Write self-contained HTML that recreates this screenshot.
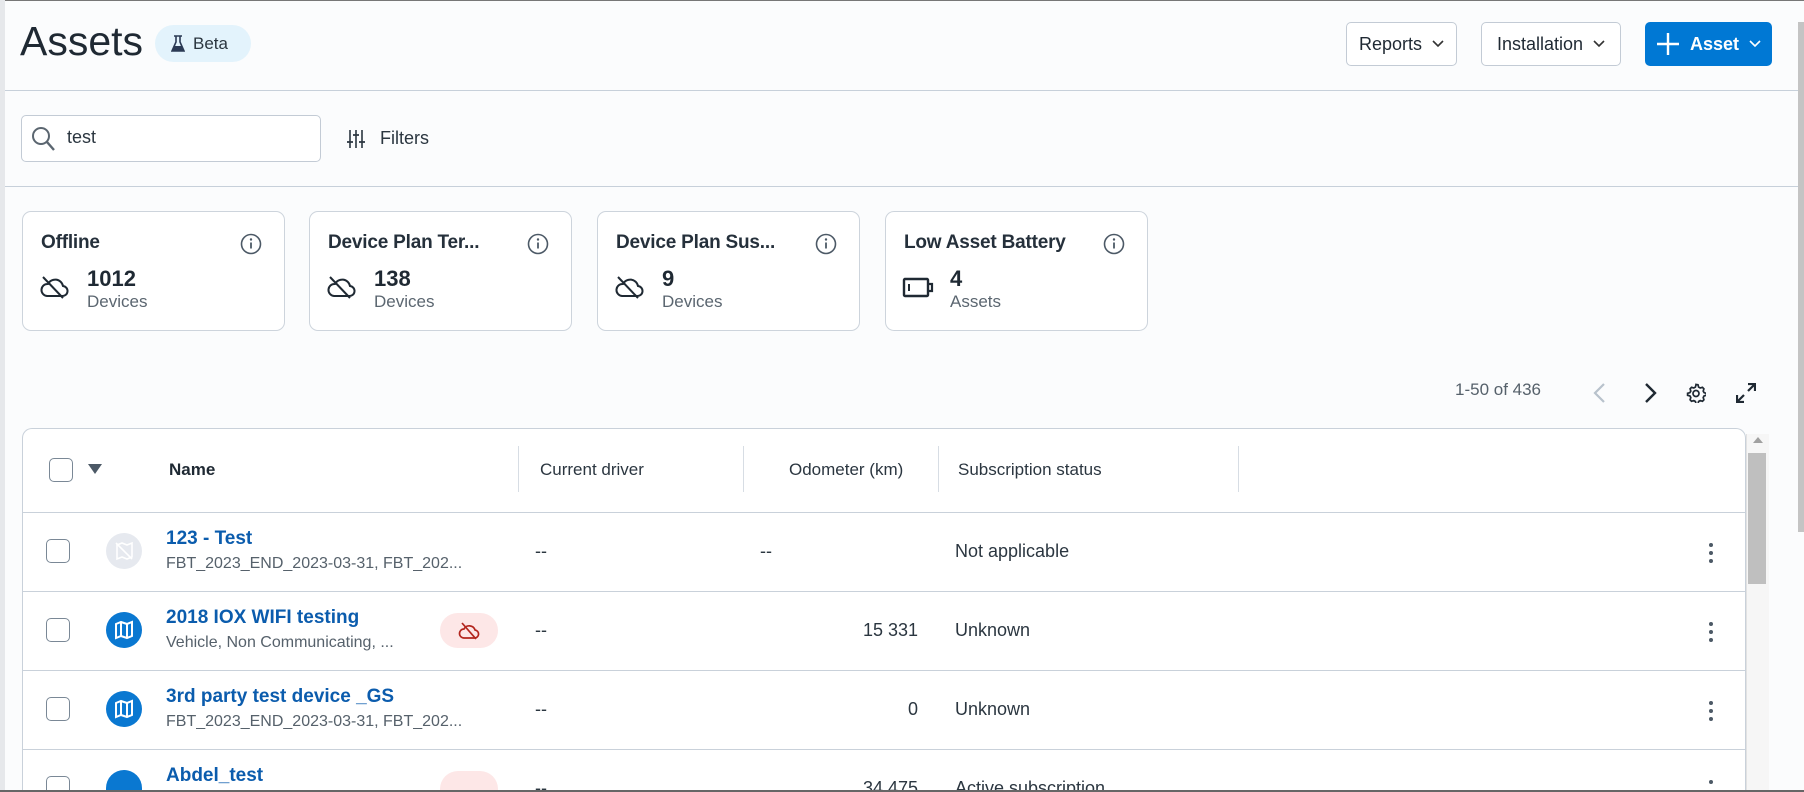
<!DOCTYPE html>
<html style="overflow:hidden;height:792px"><head><meta charset="utf-8"><style>
*{box-sizing:border-box;margin:0;padding:0}
body{width:1804px;height:792px;overflow:hidden;background:#fbfcfd;font-family:"Liberation Sans",Arial,sans-serif;color:#1f2933;position:relative}
.a{position:absolute}
.btn{position:absolute;top:22px;height:44px;border:1px solid #c3cbd5;border-radius:5px;background:#fff;font-size:18px;display:flex;align-items:center;justify-content:center;gap:10px;color:#1f2933}
.card{position:absolute;top:211px;width:263px;height:120px;border:1px solid #cdd4dc;border-radius:9px;background:#fff}
.card .t{position:absolute;left:18px;top:20px;font-size:19px;font-weight:bold;color:#25303b;letter-spacing:-0.2px}
.card .n{position:absolute;left:64px;top:54px;font-size:22px;font-weight:bold;color:#1f2933}
.card .u{position:absolute;left:64px;top:80px;font-size:17px;color:#5b6670}
.card .i{position:absolute;right:22px;top:21px}
.card .ic{position:absolute;left:16px;top:62px}
.hd{position:absolute;top:460px;font-size:17px;color:#2b3640}
.sep{position:absolute;top:446px;width:1px;height:46px;background:#d7dde4}
.rl{position:absolute;left:22px;width:1724px;height:1px;background:#c9d1da}
.cb{position:absolute;width:24px;height:24px;border:1.5px solid #7a8896;border-radius:5px;background:#fff}
.nm{position:absolute;left:166px;font-size:19px;color:#0b5cad;font-weight:bold}
.sub{position:absolute;left:166px;font-size:16px;color:#56616b}
.cell{position:absolute;font-size:18px;color:#2b3640}
.av{position:absolute;left:106px;width:36px;height:36px;border-radius:50%;background:#0a78d1;display:flex;align-items:center;justify-content:center}
.kb{position:absolute;left:1709px;width:4px}
.kb i{display:block;width:4px;height:4px;border-radius:2px;background:#4c5966;margin-bottom:4px}
.pill{position:absolute;left:440px;width:58px;height:35px;border-radius:18px;background:#fde7e7;display:flex;align-items:center;justify-content:center}
</style></head><body>
<div class="a" style="left:0;top:0;width:1804px;height:1px;background:#777"></div>
<div class="a" style="left:0;top:0;width:5px;height:792px;background:#e6e8eb"></div>
<div class="a" style="left:1798px;top:22px;width:6px;height:510px;background:#c4c4c4"></div>

<div class="a" style="left:20px;top:18px;font-size:41px;color:#1f2933">Assets</div>
<div class="a" style="left:155px;top:25px;width:96px;height:37px;border-radius:19px;background:#e3f3fc;display:flex;align-items:center;padding-left:16px;gap:8px;font-size:17px;color:#2b3640">
<svg width="14" height="18" viewBox="0 0 14 18"><path d="M3 1h8M5 1v6L1 16h12L9 7V1" fill="none" stroke="#2b3a55" stroke-width="1.6"/><path d="M3 11h8l2 5H1z" fill="#2b3a55"/></svg>Beta</div>

<div class="btn" style="left:1346px;width:111px">Reports <svg width="12" height="8"><path d="M1 1l5 5 5-5" fill="none" stroke="#333" stroke-width="1.6"/></svg></div>
<div class="btn" style="left:1481px;width:140px">Installation <svg width="12" height="8"><path d="M1 1l5 5 5-5" fill="none" stroke="#333" stroke-width="1.6"/></svg></div>
<div class="btn" style="left:1645px;width:127px;background:#0078d4;border-color:#0078d4;color:#fff;font-weight:bold;gap:10px"><svg width="24" height="24"><path d="M12 1v22M1 12h22" stroke="#fff" stroke-width="2.4"/></svg>Asset <svg width="12" height="8"><path d="M1 1l5 5 5-5" fill="none" stroke="#fff" stroke-width="1.6"/></svg></div>

<div class="a" style="left:5px;top:90px;width:1793px;height:1px;background:#c7d0da"></div>
<div class="a" style="left:21px;top:115px;width:300px;height:47px;border:1px solid #c3cbd5;border-radius:5px;background:#fff"></div>
<svg class="a" style="left:30px;top:125px" width="26" height="28"><circle cx="11" cy="11" r="8" fill="none" stroke="#5b6670" stroke-width="2"/><path d="M17 17l7 8" stroke="#5b6670" stroke-width="2.4"/></svg>
<div class="a" style="left:67px;top:127px;font-size:18px;color:#2b3640">test</div>
<svg class="a" style="left:347px;top:129px" width="18" height="20"><path d="M3 1v18M9 1v18M15 1v18" stroke="#2b3640" stroke-width="1.6"/><path d="M0 13h6M6 6h6M12 13h6" stroke="#2b3640" stroke-width="1.8"/></svg>
<div class="a" style="left:380px;top:128px;font-size:18px;color:#2b3640">Filters</div>
<div class="a" style="left:5px;top:186px;width:1793px;height:1px;background:#c7d0da"></div>

<div class="card" style="left:22px"><div class="t">Offline</div><svg class="i" width="22" height="22"><circle cx="11" cy="11" r="9.5" fill="none" stroke="#4c5966" stroke-width="1.6"/><path d="M11 9.5v6" stroke="#4c5966" stroke-width="1.8"/><circle cx="11" cy="6.5" r="1.2" fill="#4c5966"/></svg>
<svg class="ic" width="30" height="26"><path d="M8 22h15a5 5 0 0 0 1-10 8 8 0 0 0-15-2 6 6 0 0 0-1 12z" fill="none" stroke="#1f2933" stroke-width="2"/><path d="M4 3l20 21" stroke="#1f2933" stroke-width="2"/></svg>
<div class="n">1012</div><div class="u">Devices</div></div>
<div class="card" style="left:309px"><div class="t">Device Plan Ter...</div><svg class="i" width="22" height="22"><circle cx="11" cy="11" r="9.5" fill="none" stroke="#4c5966" stroke-width="1.6"/><path d="M11 9.5v6" stroke="#4c5966" stroke-width="1.8"/><circle cx="11" cy="6.5" r="1.2" fill="#4c5966"/></svg>
<svg class="ic" width="30" height="26"><path d="M8 22h15a5 5 0 0 0 1-10 8 8 0 0 0-15-2 6 6 0 0 0-1 12z" fill="none" stroke="#1f2933" stroke-width="2"/><path d="M4 3l20 21" stroke="#1f2933" stroke-width="2"/></svg>
<div class="n">138</div><div class="u">Devices</div></div>
<div class="card" style="left:597px"><div class="t">Device Plan Sus...</div><svg class="i" width="22" height="22"><circle cx="11" cy="11" r="9.5" fill="none" stroke="#4c5966" stroke-width="1.6"/><path d="M11 9.5v6" stroke="#4c5966" stroke-width="1.8"/><circle cx="11" cy="6.5" r="1.2" fill="#4c5966"/></svg>
<svg class="ic" width="30" height="26"><path d="M8 22h15a5 5 0 0 0 1-10 8 8 0 0 0-15-2 6 6 0 0 0-1 12z" fill="none" stroke="#1f2933" stroke-width="2"/><path d="M4 3l20 21" stroke="#1f2933" stroke-width="2"/></svg>
<div class="n">9</div><div class="u">Devices</div></div>
<div class="card" style="left:885px"><div class="t">Low Asset Battery</div><svg class="i" width="22" height="22"><circle cx="11" cy="11" r="9.5" fill="none" stroke="#4c5966" stroke-width="1.6"/><path d="M11 9.5v6" stroke="#4c5966" stroke-width="1.8"/><circle cx="11" cy="6.5" r="1.2" fill="#4c5966"/></svg>
<svg class="ic" width="32" height="24" style="top:64px"><rect x="2" y="3" width="24" height="17" rx="1" fill="none" stroke="#1f2933" stroke-width="2.4"/><path d="M27 8h3v7h-3" fill="none" stroke="#1f2933" stroke-width="2.2"/><path d="M7 8v7" stroke="#1f2933" stroke-width="2"/></svg>
<div class="n">4</div><div class="u">Assets</div></div>

<div class="a" style="left:1455px;top:380px;font-size:17px;color:#56616b">1-50 of 436</div>
<svg class="a" style="left:1592px;top:382px" width="14" height="22"><path d="M12 2L3 11l9 9" fill="none" stroke="#b8c2cc" stroke-width="2.2"/></svg>
<svg class="a" style="left:1644px;top:382px" width="14" height="22"><path d="M2 2l9 9-9 9" fill="none" stroke="#1f2933" stroke-width="2.4"/></svg>
<svg class="a" style="left:1686px;top:383px" width="20" height="20" viewBox="0 0 20 20"><path d="M10 1.5l2 .3.6 2.3 1.6.9 2.3-.7 1.4 1.5-.7 2.3.9 1.6 2.3.6v2l-2.3.6-.9 1.6.7 2.3-1.4 1.5-2.3-.7-1.6.9-.6 2.3h-2l-.6-2.3-1.6-.9-2.3.7-1.4-1.5.7-2.3-.9-1.6-2.3-.6v-2l2.3-.6.9-1.6-.7-2.3 1.4-1.5 2.3.7 1.6-.9.6-2.3z" fill="none" stroke="#1f2933" stroke-width="1.7"/><circle cx="10" cy="10.5" r="3" fill="none" stroke="#1f2933" stroke-width="1.7"/></svg>
<svg class="a" style="left:1736px;top:383px" width="20" height="20"><path d="M12 1h7v7M19 1l-7 7M8 19H1v-7M1 19l7-7" fill="none" stroke="#1f2933" stroke-width="2.2"/></svg>

<div class="a" style="left:22px;top:428px;width:1724px;height:364px;border:1px solid #c9d1da;border-bottom:none;border-radius:10px 10px 0 0;background:#fff"></div>
<div class="a" style="left:1746px;top:434px;width:23px;height:358px;background:#f6f6f6;border-left:1px solid #e2e2e2"></div>
<svg class="a" style="left:1752px;top:436px" width="12" height="8"><path d="M1 7l5-6 5 6z" fill="#a0a0a0"/></svg>
<div class="a" style="left:1748px;top:453px;width:18px;height:131px;background:#bfbfbf"></div>

<div class="cb" style="left:49px;top:458px"></div>
<svg class="a" style="left:87px;top:463px" width="16" height="12"><path d="M1 1h14L8 11z" fill="#4c5966"/></svg>
<div class="hd" style="left:169px;font-weight:bold;color:#1f2933">Name</div>
<div class="sep" style="left:518px"></div>
<div class="hd" style="left:540px">Current driver</div>
<div class="sep" style="left:743px"></div>
<div class="hd" style="left:789px">Odometer (km)</div>
<div class="sep" style="left:938px"></div>
<div class="hd" style="left:958px">Subscription status</div>
<div class="sep" style="left:1238px"></div>
<div class="rl" style="top:512px"></div>
<div class="rl" style="top:591px;width:1723px"></div>
<div class="rl" style="top:670px;width:1723px"></div>
<div class="rl" style="top:749px;width:1723px"></div>

<!-- row1 -->
<div class="cb" style="left:46px;top:539px"></div>
<div class="av" style="top:533px;background:#e6e9ef"><svg width="20" height="20"><path d="M3 4l5-2 5 2 5-2v14l-5 2-5-2-5 2z" fill="none" stroke="#fff" stroke-width="1.6"/><path d="M2 2l16 16" stroke="#fff" stroke-width="1.6"/></svg></div>
<div class="nm" style="top:528px">123 - Test</div>
<div class="sub" style="top:555px">FBT_2023_END_2023-03-31, FBT_202...</div>
<div class="cell" style="left:535px;top:541px">--</div>
<div class="cell" style="left:760px;top:541px">--</div>
<div class="cell" style="left:955px;top:541px">Not applicable</div>
<div class="kb" style="top:543px"><i></i><i></i><i></i></div>
<!-- row2 -->
<div class="cb" style="left:46px;top:618px"></div>
<div class="av" style="top:612px"><svg width="20" height="20"><path d="M2 4l5-2 6 2 5-2v14l-5 2-6-2-5 2z" fill="none" stroke="#fff" stroke-width="2"/><path d="M7 2v14M13 4v14" stroke="#fff" stroke-width="2"/></svg></div>
<div class="nm" style="top:607px">2018 IOX WIFI testing</div>
<div class="sub" style="top:634px">Vehicle, Non Communicating, ...</div>
<div class="pill" style="top:613px"><svg width="22" height="18"><path d="M6 16h10a4 4 0 0 0 1-8 6 6 0 0 0-11-1 4.5 4.5 0 0 0 0 9z" fill="none" stroke="#b3261e" stroke-width="1.7"/><path d="M4 1l14 16" stroke="#b3261e" stroke-width="1.7"/></svg></div>
<div class="cell" style="left:535px;top:620px">--</div>
<div class="cell" style="left:855px;top:620px;width:63px;text-align:right">15 331</div>
<div class="cell" style="left:955px;top:620px">Unknown</div>
<div class="kb" style="top:622px"><i></i><i></i><i></i></div>
<!-- row3 -->
<div class="cb" style="left:46px;top:697px"></div>
<div class="av" style="top:691px"><svg width="20" height="20"><path d="M2 4l5-2 6 2 5-2v14l-5 2-6-2-5 2z" fill="none" stroke="#fff" stroke-width="2"/><path d="M7 2v14M13 4v14" stroke="#fff" stroke-width="2"/></svg></div>
<div class="nm" style="top:686px">3rd party test device _GS</div>
<div class="sub" style="top:713px">FBT_2023_END_2023-03-31, FBT_202...</div>
<div class="cell" style="left:535px;top:699px">--</div>
<div class="cell" style="left:855px;top:699px;width:63px;text-align:right">0</div>
<div class="cell" style="left:955px;top:699px">Unknown</div>
<div class="kb" style="top:701px"><i></i><i></i><i></i></div>
<!-- row4 -->
<div class="cb" style="left:46px;top:776px;height:14px;border-bottom:none;border-radius:5px 5px 0 0"></div>
<div class="av" style="top:770px;height:20px;border-radius:18px 18px 0 0"></div>
<div class="nm" style="top:765px">Abdel_test</div>
<div class="pill" style="top:771px;height:19px;border-radius:18px 18px 0 0"></div>
<div class="cell" style="left:535px;top:778px;height:12px;overflow:hidden">--</div>
<div class="cell" style="left:838px;top:778px;width:80px;text-align:right;height:12px;overflow:hidden">34 475</div>
<div class="cell" style="left:955px;top:778px;height:12px;overflow:hidden">Active subscription</div>
<div class="kb" style="top:780px"><i></i></div>
<div class="a" style="left:0;top:790px;width:1804px;height:2px;background:#666"></div>
</body></html>
